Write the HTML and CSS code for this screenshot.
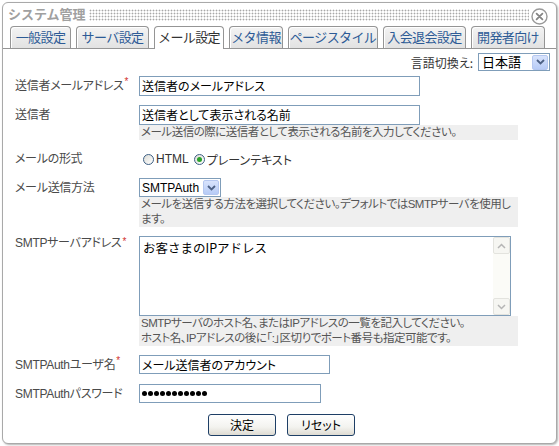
FILE: index.html
```html
<!DOCTYPE html>
<html lang="ja">
<head>
<meta charset="utf-8">
<title>システム管理</title>
<link rel="stylesheet" href="styles.css">
</head>
<body>
<div class="window">
  <div class="titlebar">
    <span class="title">システム管理</span>
    <span class="dots"></span>
    <span class="close">
      <svg width="17" height="17" viewBox="0 0 17 17"><circle cx="8.5" cy="8.5" r="7.5" fill="#fff" stroke="#9a9a9a" stroke-width="1.4"/><path d="M5.6 5.6 L11.4 11.4 M11.4 5.6 L5.6 11.4" stroke="#858585" stroke-width="1.8" stroke-linecap="round"/></svg>
    </span>
  </div>
  <div class="tabs">
    <span class="tab t1">一般設定</span>
    <span class="tab t2">サーバ設定</span>
    <span class="tab t3 active">メール設定</span>
    <span class="tab t4">メタ情報</span>
    <span class="tab t5">ページスタイル</span>
    <span class="tab t6">入会退会設定</span>
    <span class="tab t7">開発者向け</span>
  </div>
  <div class="content">
    <div class="lang-row">
      <span class="lang-label">言語切換え:</span>
      <span class="select lang-select">
        <span class="select-text">日本語</span>
        <span class="select-btn"><svg width="9" height="6" viewBox="0 0 9 6"><polyline points="1,1 4.5,4.5 8,1" fill="none" stroke="#4d6185" stroke-width="1.8"/></svg></span>
      </span>
    </div>
    <div class="form">
      <div class="row">
        <span class="label">送信者メールアドレス<span class="req">*</span></span>
        <div class="field"><div class="input w-long">送信者のメールアドレス</div></div>
      </div>
      <div class="row">
        <span class="label">送信者</span>
        <div class="field">
          <div class="input w-long">送信者として表示される名前</div>
          <div class="help">メール送信の際に送信者として表示される名前を入力してください。</div>
        </div>
      </div>
      <div class="row">
        <span class="label">メールの形式</span>
        <div class="field radios">
          <span class="radio"></span><span class="radio-text">HTML</span>
          <span class="radio checked"></span><span class="radio-text">プレーンテキスト</span>
        </div>
      </div>
      <div class="row">
        <span class="label">メール送信方法</span>
        <div class="field">
          <span class="select smtp-select">
            <span class="select-text latin">SMTPAuth</span>
            <span class="select-btn"><svg width="9" height="6" viewBox="0 0 9 6"><polyline points="1,1 4.5,4.5 8,1" fill="none" stroke="#4d6185" stroke-width="1.8"/></svg></span>
          </span>
          <div class="help">メールを送信する方法を選択してください。デフォルトではSMTPサーバを使用します。</div>
        </div>
      </div>
      <div class="row">
        <span class="label label-top">SMTPサーバアドレス<span class="req">*</span></span>
        <div class="field">
          <div class="textarea">
            <div class="textarea-text">お客さまのIPアドレス</div>
            <div class="scrollbar">
              <span class="sb-btn"><svg width="9" height="6" viewBox="0 0 9 6"><polyline points="1,5 4.5,1.5 8,5" fill="none" stroke="#b5b5b5" stroke-width="1.5"/></svg></span>
              <span class="sb-track"></span>
              <span class="sb-btn"><svg width="9" height="6" viewBox="0 0 9 6"><polyline points="1,1 4.5,4.5 8,1" fill="none" stroke="#b5b5b5" stroke-width="1.5"/></svg></span>
            </div>
          </div>
          <div class="help">SMTPサーバのホスト名、またはIPアドレスの一覧を記入してください。<br>ホスト名、IPアドレスの後に「:」区切りでポート番号も指定可能です。</div>
        </div>
      </div>
      <div class="row">
        <span class="label">SMTPAuthユーザ名<span class="req">*</span></span>
        <div class="field"><div class="input w-user">メール送信者のアカウント</div></div>
      </div>
      <div class="row">
        <span class="label">SMTPAuthパスワード</span>
        <div class="field">
          <div class="input w-pass pw">
            <span class="pw-dot"></span><span class="pw-dot"></span><span class="pw-dot"></span><span class="pw-dot"></span><span class="pw-dot"></span><span class="pw-dot"></span><span class="pw-dot"></span><span class="pw-dot"></span><span class="pw-dot"></span><span class="pw-dot"></span><span class="pw-dot"></span>
          </div>
        </div>
      </div>
    </div>
    <div class="buttons">
      <span class="button">決定</span>
      <span class="button">リセット</span>
    </div>
  </div>
</div>
</body>
</html>
```
FILE: styles.css
```css
body {
  margin: 0;
  background: #fff;
  font-family: "Liberation Sans", "Noto Sans CJK JP", sans-serif;
  font-size: 12px;
  color: #333;
}

.window {
  margin: 2px;
  width: 555px;
  height: 442px;
  box-sizing: border-box;
  border: 1px solid #a9a9a9;
  border-radius: 6px;
  box-shadow: 1px 1px 2px rgba(0, 0, 0, 0.3);
  display: flex;
  flex-direction: column;
  overflow: hidden;
  background: #fff;
}

/* title bar */
.titlebar {
  height: 20px;
  display: flex;
  align-items: center;
  padding-left: 5px;
}
.title {
  font-family: "Noto Sans CJK JP", sans-serif;
  font-size: 13px;
  font-weight: bold;
  color: #a0a0a0;
  line-height: 14px;
  margin-top: 2px;
}
.dots {
  flex: 1;
  height: 12px;
  margin: 3px 1px 0 3px;
  background-image: radial-gradient(circle, #a8a8a8 0.8px, transparent 1.1px);
  background-size: 3px 3px;
}
.close {
  width: 17px;
  height: 17px;
  margin: 6px 8px 0 1px;
  display: flex;
}

/* tabs */
.tabs {
  box-sizing: border-box;
  height: 26px;
  display: flex;
  align-items: flex-end;
  gap: 5px;
  padding-left: 7px;
  border-bottom: 1px solid #959595;
}
.tab {
  box-sizing: border-box;
  height: 22px;
  border: 1px solid #959595;
  border-bottom: none;
  border-radius: 4px 4px 0 0;
  background: linear-gradient(#f3f3f3, #e2e2e2);
  box-shadow: inset 1px 1px 0 #fff;
  color: #2d5b96;
  font-family: "Noto Sans CJK JP", sans-serif;
  font-size: 13px;
  letter-spacing: -0.6px;
  line-height: 20px;
  text-align: center;
}
.tab.active {
  background: #fff;
  color: #333;
  height: 23px;
  margin-bottom: -1px;
}
.t1 { width: 61px; }
.t2 { width: 73px; }
.t3 { width: 70px; }
.t4 { width: 54px; }
.t5 { width: 90px; }
.t6 { width: 83px; }
.t7 { width: 74px; }

/* content */
.content {
  display: flex;
  flex-direction: column;
}
.lang-row {
  margin-top: 4px;
  height: 18px;
  display: flex;
  justify-content: flex-end;
  align-items: center;
  padding-right: 6px;
}
.lang-label {
  font-family: "Noto Sans CJK JP", sans-serif;
  font-feature-settings: "palt";
  font-size: 12px;
  color: #333;
  margin-right: 5px;
}

.select {
  box-sizing: border-box;
  border: 1px solid #7f9db9;
  display: flex;
  align-items: center;
  justify-content: space-between;
  background: #fff;
}
.lang-select {
  width: 72px;
  height: 18px;
}
.smtp-select {
  width: 82px;
  height: 19px;
}
.select-text {
  font-family: "Noto Sans CJK JP", sans-serif;
  font-size: 13px;
  color: #000;
  padding-left: 3px;
  line-height: 16px;
}
.select-text.latin {
  font-family: "Liberation Sans", sans-serif;
  font-size: 12px;
  padding-left: 2px;
}
.select-btn {
  width: 16px;
  height: 15px;
  margin-right: 1px;
  box-sizing: border-box;
  border: 1px solid #b5c7f0;
  border-radius: 2px;
  background: linear-gradient(#d8e3fc, #b7cbf6);
  display: flex;
  align-items: center;
  justify-content: center;
}

/* form */
.form {
  margin-top: 5px;
  padding-left: 12px;
  display: flex;
  flex-direction: column;
  gap: 9px;
}
.row {
  display: flex;
  align-items: flex-start;
}
.label {
  width: 124px;
  flex: none;
  font-family: "Liberation Sans", "Noto Sans CJK JP", sans-serif;
  font-feature-settings: "palt";
  font-size: 12px;
  letter-spacing: -0.3px;
  line-height: 20px;
  color: #4a4a4a;
  white-space: nowrap;
}
.label-top {
  line-height: 14px;
}
.req {
  color: #d2322d;
  font-size: 10px;
  vertical-align: top;
  line-height: 12px;
  margin-left: 1px;
}
.field {
  display: flex;
  flex-direction: column;
  align-items: flex-start;
}

.input {
  box-sizing: border-box;
  height: 20px;
  border: 1px solid #7f9db9;
  padding: 0 2px;
  font-family: "Noto Sans CJK JP", sans-serif;
  font-feature-settings: "palt";
  font-size: 12px;
  line-height: 18px;
  color: #000;
  white-space: nowrap;
  overflow: hidden;
}
.w-long { width: 281px; }
.w-user { width: 191px; height: 19px; line-height: 17px; }
.w-pass { width: 182px; height: 19px; }

.pw {
  display: flex;
  align-items: center;
  gap: 1px;
  padding-left: 2px;
}
.pw-dot {
  width: 5px;
  height: 5px;
  border-radius: 50%;
  background: #000;
}

.help {
  box-sizing: border-box;
  width: 379px;
  background: #efefef;
  color: #555;
  font-family: "Liberation Sans", "Noto Sans CJK JP", sans-serif;
  font-feature-settings: "palt";
  font-size: 11.5px;
  letter-spacing: -0.5px;
  line-height: 15px;
  padding: 0 2px;
}

/* radios */
.radios {
  flex-direction: row;
  align-items: center;
  height: 20px;
  padding-left: 4px;
}
.radio {
  box-sizing: border-box;
  width: 11px;
  height: 11px;
  border: 1px solid #3d5f84;
  border-radius: 50%;
  background: linear-gradient(135deg, #dcdcd6, #fff);
  margin-right: 2px;
  display: flex;
  align-items: center;
  justify-content: center;
}
.radio.checked::after {
  content: "";
  width: 5px;
  height: 5px;
  border-radius: 50%;
  background: #2aa22a;
}
.radio-text {
  font-family: "Liberation Sans", "Noto Sans CJK JP", sans-serif;
  font-feature-settings: "palt";
  font-size: 12px;
  color: #333;
  margin-right: 5px;
}

/* textarea */
.textarea {
  box-sizing: border-box;
  width: 372px;
  height: 80px;
  border: 1px solid #7f9db9;
  display: flex;
  background: #fff;
}
.textarea-text {
  flex: 1;
  padding: 2px 3px;
  font-family: "Noto Sans CJK JP", sans-serif;
  font-size: 12.5px;
  line-height: 18px;
  color: #000;
}
.scrollbar {
  width: 17px;
  display: flex;
  flex-direction: column;
  background: #fbfbf7;
}
.sb-btn {
  box-sizing: border-box;
  width: 17px;
  height: 17px;
  border: 1px solid #e3e3de;
  border-radius: 2px;
  background: #f6f6f2;
  display: flex;
  align-items: center;
  justify-content: center;
}
.sb-track {
  flex: 1;
}

/* buttons */
.buttons {
  margin-top: 10px;
  padding-left: 4px;
  display: flex;
  justify-content: center;
  gap: 11px;
}
.button {
  box-sizing: border-box;
  width: 68px;
  height: 22px;
  border: 1px solid #1e3f66;
  border-radius: 3px;
  background: linear-gradient(#ffffff, #f3f3ef 60%, #dedbd2);
  font-family: "Noto Sans CJK JP", sans-serif;
  font-feature-settings: "palt";
  font-size: 12px;
  line-height: 20px;
  color: #000;
  text-align: center;
}
```
